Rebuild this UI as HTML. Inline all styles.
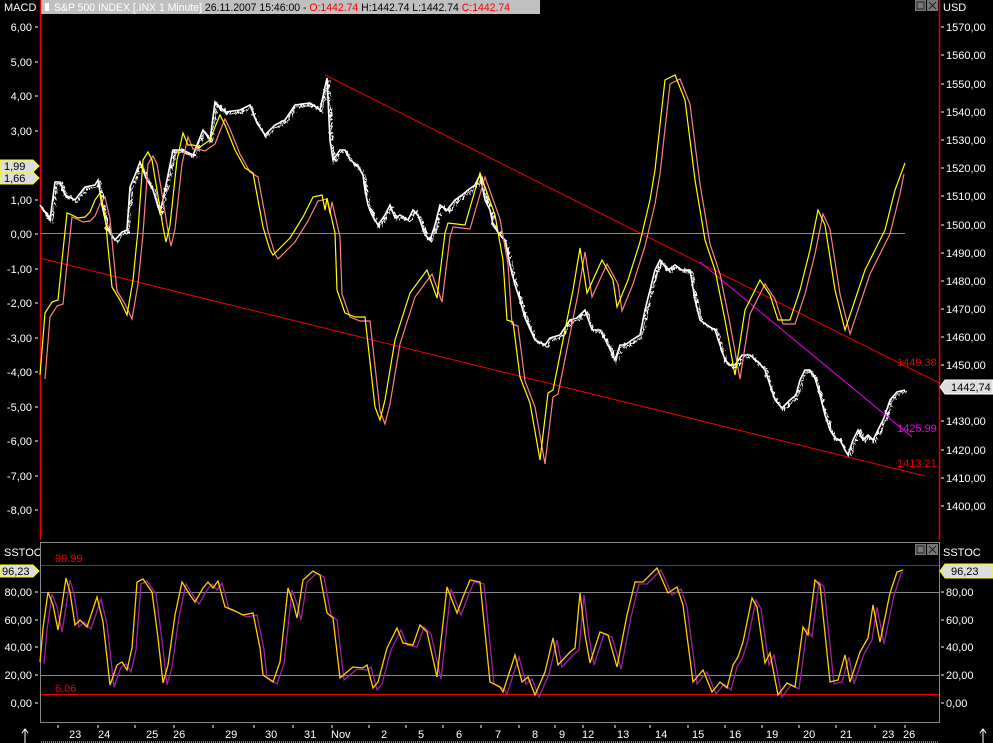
<!DOCTYPE html>
<html><head><meta charset="utf-8">
<style>
html,body{margin:0;padding:0;background:#000;width:993px;height:743px;overflow:hidden}
svg{display:block;font-family:"Liberation Sans",sans-serif}
</style></head>
<body>
<svg width="993" height="743" viewBox="0 0 993 743" xmlns="http://www.w3.org/2000/svg">
<defs>
<filter id="jit" x="-0.05" y="-0.3" width="1.1" height="1.6">
<feTurbulence type="turbulence" baseFrequency="0.3 0.15" numOctaves="2" seed="3" result="t"/>
<feDisplacementMap in="SourceGraphic" in2="t" scale="7" xChannelSelector="B" yChannelSelector="R"/>
</filter>
</defs>
<rect width="993" height="743" fill="#000"/>
<rect x="40" y="0" width="500" height="14" fill="#c0c0c0"/>
<rect x="45" y="3" width="4" height="8" fill="#fff"/>
<text x="4" y="11" fill="#fff" font-size="11">MACD</text>
<text x="54" y="11" font-size="11" fill="#fff" textLength="456" lengthAdjust="spacingAndGlyphs">S&amp;P 500 INDEX [.INX  1 Minute] <tspan fill="#000">26.11.2007 15:46:00 - </tspan><tspan fill="#e00">O:1442.74</tspan><tspan fill="#000"> H:1442.74 L:1442.74 </tspan><tspan fill="#e00">C:1442.74</tspan></text>
<rect x="915" y="0" width="11" height="11" fill="#777"/><rect x="917" y="2" width="7" height="7" fill="none" stroke="#222"/>
<rect x="927" y="0" width="11" height="11" fill="#777"/><path d="M929 2l7 7M936 2l-7 7" stroke="#222"/>
<rect x="915" y="544" width="11" height="11" fill="#777"/><rect x="917" y="546" width="7" height="7" fill="none" stroke="#222"/>
<rect x="927" y="544" width="11" height="11" fill="#777"/><path d="M929 546l7 7M936 546l-7 7" stroke="#222"/>
<text x="943" y="11" fill="#fff" font-size="11">USD</text>
<text x="943" y="556" fill="#fff" font-size="11">SSTOC</text>
<text x="4" y="556" fill="#fff" font-size="11">SSTOC</text>
<line x1="40.5" y1="0" x2="40.5" y2="540" stroke="#e00" stroke-width="1.5"/>
<line x1="939.5" y1="0" x2="939.5" y2="540" stroke="#e00" stroke-width="1.5"/>
<rect x="40.5" y="542.5" width="899" height="180" fill="none" stroke="#888"/>
<g fill="#fff" font-size="11" text-anchor="end">
<text x="32" y="31">6,00</text><text x="32" y="66">5,00</text><text x="32" y="100">4,00</text><text x="32" y="135">3,00</text>
<text x="32" y="204">1,00</text><text x="32" y="238">0,00</text><text x="32" y="273">-1,00</text><text x="32" y="307">-2,00</text>
<text x="32" y="342">-3,00</text><text x="32" y="376">-4,00</text><text x="32" y="411">-5,00</text><text x="32" y="445">-6,00</text>
<text x="32" y="480">-7,00</text><text x="32" y="514">-8,00</text>
</g>
<g fill="#fff" font-size="11">
<text x="946" y="31">1570,00</text><text x="946" y="59">1560,00</text><text x="946" y="88">1550,00</text><text x="946" y="116">1540,00</text>
<text x="946" y="144">1530,00</text><text x="946" y="172">1520,00</text><text x="946" y="200">1510,00</text><text x="946" y="229">1500,00</text>
<text x="946" y="257">1490,00</text><text x="946" y="285">1480,00</text><text x="946" y="313">1470,00</text><text x="946" y="341">1460,00</text>
<text x="946" y="369">1450,00</text><text x="946" y="425">1430,00</text><text x="946" y="454">1420,00</text><text x="946" y="482">1410,00</text>
<text x="946" y="510">1400,00</text>
<text x="946" y="596">80,00</text><text x="946" y="624">60,00</text><text x="946" y="651">40,00</text><text x="946" y="679">20,00</text><text x="946" y="707">0,00</text>
</g>
<g fill="#fff" font-size="11" text-anchor="end">
<text x="32" y="596">80,00</text><text x="32" y="624">60,00</text><text x="32" y="651">40,00</text><text x="32" y="679">20,00</text><text x="32" y="707">0,00</text>
</g>
<g stroke="#fff">
<path d="M35 27h3M35 62h3M35 96h3M35 131h3M35 200h3M35 234h3M35 269h3M35 303h3M35 338h3M35 372h3M35 407h3M35 441h3M35 476h3M35 510h3M35 592h3M35 620h3M35 647h3M35 675h3M35 703h3"/>
<path d="M941 27h3M941 55h3M941 84h3M941 112h3M941 140h3M941 168h3M941 196h3M941 225h3M941 253h3M941 281h3M941 309h3M941 337h3M941 365h3M941 421h3M941 450h3M941 478h3M941 506h3M941 592h3M941 620h3M941 647h3M941 675h3M941 703h3"/>
</g>
<line x1="41" y1="233.5" x2="905" y2="233.5" stroke="#888"/>
<line x1="41" y1="592.5" x2="939" y2="592.5" stroke="#888"/>
<line x1="41" y1="675.5" x2="939" y2="675.5" stroke="#888"/>
<line x1="41" y1="565.5" x2="939" y2="565.5" stroke="#e00"/>
<line x1="41" y1="694.5" x2="939" y2="694.5" stroke="#e00"/>
<text x="55" y="562" fill="#e00" font-size="11">99.99</text>
<text x="55" y="692" fill="#e00" font-size="11">6.06</text>
<!-- price -->
<g fill="none" stroke="#fff">
<polyline id="pr" stroke-width="1.6" points="40,205 45,212 50,220 55,182 60,182 65,195 75,200 85,187 95,185 98,180 102,205 107,228 115,240 122,232 127,230 130,187 135,175 140,162 146,178 153,190 160,213 166,185 173,150 183,150 193,155 203,130 210,140 215,102 225,112 240,110 250,105 257,123 265,135 275,125 285,120 295,105 310,103 320,110 327,78 330,140 333,160 340,150 345,150 350,160 357,165 363,175 365,190 368,205 372,215 378,225 385,215 390,205 395,218 400,215 408,220 413,210 418,215 425,235 430,240 435,225 440,205 447,210 455,200 462,195 468,190 475,185 480,175 485,200 490,210 493,225 500,235 505,240 510,265 515,285 520,300 525,318 535,340 545,345 550,338 560,335 570,320 577,318 585,310 592,330 600,330 608,345 615,360 620,345 625,345 632,340 640,335 645,310 650,290 655,270 660,260 668,270 675,265 682,270 690,270 695,300 700,320 707,325 715,330 720,345 725,360 730,365 735,365 742,355 750,355 758,362 765,370 770,385 775,400 782,408 790,400 796,395 800,380 805,370 810,370 815,378 820,395 825,415 830,430 835,438 840,440 845,450 848,455 853,440 858,430 863,440 868,435 873,440 878,430 884,418 890,400 897,392 905,390"/>
<use href="#pr" stroke-width="2.2" filter="url(#jit)"/>
</g>
<line x1="325" y1="75" x2="939" y2="383" stroke="#e00"/>
<line x1="40" y1="258" x2="925" y2="476" stroke="#e00"/>
<line x1="700" y1="262" x2="912" y2="437" stroke="#e0e"/>
<text x="897" y="366" fill="#e00" font-size="11">1449.38</text>
<text x="897" y="432" fill="#e0e" font-size="11">1425.99</text>
<text x="897" y="467" fill="#e00" font-size="11">1413.21</text>
<g fill="none" stroke-width="1.2">
<polyline stroke="#ff8080" transform="translate(5,4)" points="40,375 45,313 52,302 58,300 62,260 67,213 72,215 78,218 85,217 90,212 95,200 100,193 105,215 108,247 112,287 120,300 127,315 133,280 138,230 143,160 148,152 152,160 157,190 163,227 166,242 170,225 177,160 183,133 188,145 193,145 200,147 210,140 215,127 220,115 225,125 235,150 245,168 253,173 263,227 270,250 273,255 283,245 290,238 303,217 313,197 322,195 325,210 327,198 335,233 337,290 345,313 355,317 365,317 375,407 380,420 385,400 395,340 410,293 427,270 437,298 445,233 448,223 465,225 480,173 495,215 503,260 507,320 513,322 520,377 530,403 540,460 548,393 553,390 573,290 580,248 587,293 602,260 613,280 617,307 628,280 640,242 650,200 655,170 665,80 675,75 685,100 695,180 705,240 715,270 725,320 735,375 745,310 760,280 770,295 778,320 790,320 800,290 810,250 818,210 825,225 835,290 845,330 855,300 865,270 875,250 885,230 895,190 899,170"/>
<polyline stroke="#ff0" points="40,375 45,313 52,302 58,300 62,260 67,213 72,215 78,218 85,217 90,212 95,200 100,193 105,215 108,247 112,287 120,300 127,315 133,280 138,230 143,160 148,152 152,160 157,190 163,227 166,242 170,225 177,160 183,133 188,145 193,145 200,147 210,140 215,127 220,115 225,125 235,150 245,168 253,173 263,227 270,250 273,255 283,245 290,238 303,217 313,197 322,195 325,210 327,198 335,233 337,290 345,313 355,317 365,317 375,407 380,420 385,400 395,340 410,293 427,270 437,298 445,233 448,223 465,225 480,173 495,215 503,260 507,320 513,322 520,377 530,403 540,460 548,393 553,390 573,290 580,248 587,293 602,260 613,280 617,307 628,280 640,242 650,200 655,170 665,80 675,75 685,100 695,180 705,240 715,270 725,320 735,375 745,310 760,280 770,295 778,320 790,320 800,290 810,250 818,210 825,225 835,290 845,330 855,300 865,270 875,250 885,230 895,190 905,163"/>
</g>
<g fill="none" stroke-width="1.3">
<polyline stroke="#a020a0" transform="translate(4,2)" points="40,662 43,628 48,592 53,605 58,630 62,605 66,578 70,592 75,625 80,620 87,627 97,597 103,622 110,685 117,665 122,662 127,670 132,648 137,582 143,579 152,592 158,638 163,683 168,665 175,615 182,582 190,595 195,602 203,588 208,582 213,588 218,581 225,607 233,610 243,615 253,613 260,648 263,675 273,682 280,662 288,588 293,602 297,618 303,580 313,571 320,575 327,613 333,618 340,678 353,667 363,668 367,665 373,688 378,682 387,648 397,628 403,643 413,645 420,625 427,632 437,677 447,587 457,613 463,597 470,580 480,582 490,682 500,687 503,692 515,655 522,682 528,677 535,695 545,672 553,638 558,665 570,652 575,648 580,593 585,635 590,663 600,632 608,635 617,667 627,615 635,582 643,582 657,568 668,593 677,587 683,605 693,682 703,670 712,692 720,682 727,688 733,665 738,657 743,642 752,598 757,607 765,663 770,653 778,695 787,683 795,687 803,627 808,635 815,580 820,585 830,682 838,680 845,655 850,682 860,652 868,638 873,605 880,642 890,593 897,572 899,570"/>
<polyline stroke="#ffd000" points="40,662 43,628 48,592 53,605 58,630 62,605 66,578 70,592 75,625 80,620 87,627 97,597 103,622 110,685 117,665 122,662 127,670 132,648 137,582 143,579 152,592 158,638 163,683 168,665 175,615 182,582 190,595 195,602 203,588 208,582 213,588 218,581 225,607 233,610 243,615 253,613 260,648 263,675 273,682 280,662 288,588 293,602 297,618 303,580 313,571 320,575 327,613 333,618 340,678 353,667 363,668 367,665 373,688 378,682 387,648 397,628 403,643 413,645 420,625 427,632 437,677 447,587 457,613 463,597 470,580 480,582 490,682 500,687 503,692 515,655 522,682 528,677 535,695 545,672 553,638 558,665 570,652 575,648 580,593 585,635 590,663 600,632 608,635 617,667 627,615 635,582 643,582 657,568 668,593 677,587 683,605 693,682 703,670 712,692 720,682 727,688 733,665 738,657 743,642 752,598 757,607 765,663 770,653 778,695 787,683 795,687 803,627 808,635 815,580 820,585 830,682 838,680 845,655 850,682 860,652 868,638 873,605 880,642 890,593 897,572 903,570"/>
</g>
<g font-size="11">
<path d="M0 160h33l6 6-6 6H0z" fill="#ddd" stroke="#ff0"/><text x="4" y="170" fill="#000">1,99</text>
<path d="M0 172h33l6 6-6 6H0z" fill="#ddd" stroke="#ff0"/><text x="4" y="182" fill="#000">1,66</text>
<path d="M0 565h33l6 6-6 6H0z" fill="#ddd" stroke="#ff0"/><text x="2" y="575" fill="#000">96,23</text>
<path d="M993 380h-48l-5 7 5 7h48z" fill="#ddd" stroke="#fff"/><text x="951" y="391" fill="#000">1442,74</text>
<path d="M993 564h-48l-5 7 5 7h48z" fill="#ddd" stroke="#ff0"/><text x="951" y="575" fill="#000">96,23</text>
</g>
<g fill="#fff" font-size="11">
<text x="69" y="738">23</text><text x="98" y="738">24</text><text x="146" y="738">25</text><text x="173" y="738">26</text>
<text x="225" y="738">29</text><text x="265" y="738">30</text><text x="304" y="738">31</text><text x="331" y="738">Nov</text>
<text x="381" y="738">2</text><text x="418" y="738">5</text><text x="456" y="738">6</text><text x="495" y="738">7</text>
<text x="532" y="738">8</text><text x="559" y="738">9</text><text x="582" y="738">12</text><text x="617" y="738">13</text>
<text x="655" y="738">14</text><text x="692" y="738">15</text><text x="729" y="738">16</text><text x="766" y="738">19</text>
<text x="803" y="738">20</text><text x="840" y="738">21</text><text x="882" y="738">23</text><text x="903" y="738">26</text>
</g>
<g stroke="#fff">
<path d="M58 725v3M98 725v3M135 725v3M174 725v3M213 725v3M254 725v3M293 725v3M332 725v3M369 725v3M406 725v3M443 725v3M481 725v3M519 725v3M555 725v3M583 725v3M615 725v3M650 725v3M688 725v3M725 725v3M762 725v3M799 725v3M836 725v3M875 725v3M905 725v3"/>
<path d="M25 743v-14M22 733l3-4 3 4"/>
<path d="M983 743v-14M980 733l3-4 3 4"/>
</g>
<line x1="41" y1="742" x2="939" y2="742" stroke="#fff" stroke-dasharray="1 1"/>
</svg>
</body></html>
